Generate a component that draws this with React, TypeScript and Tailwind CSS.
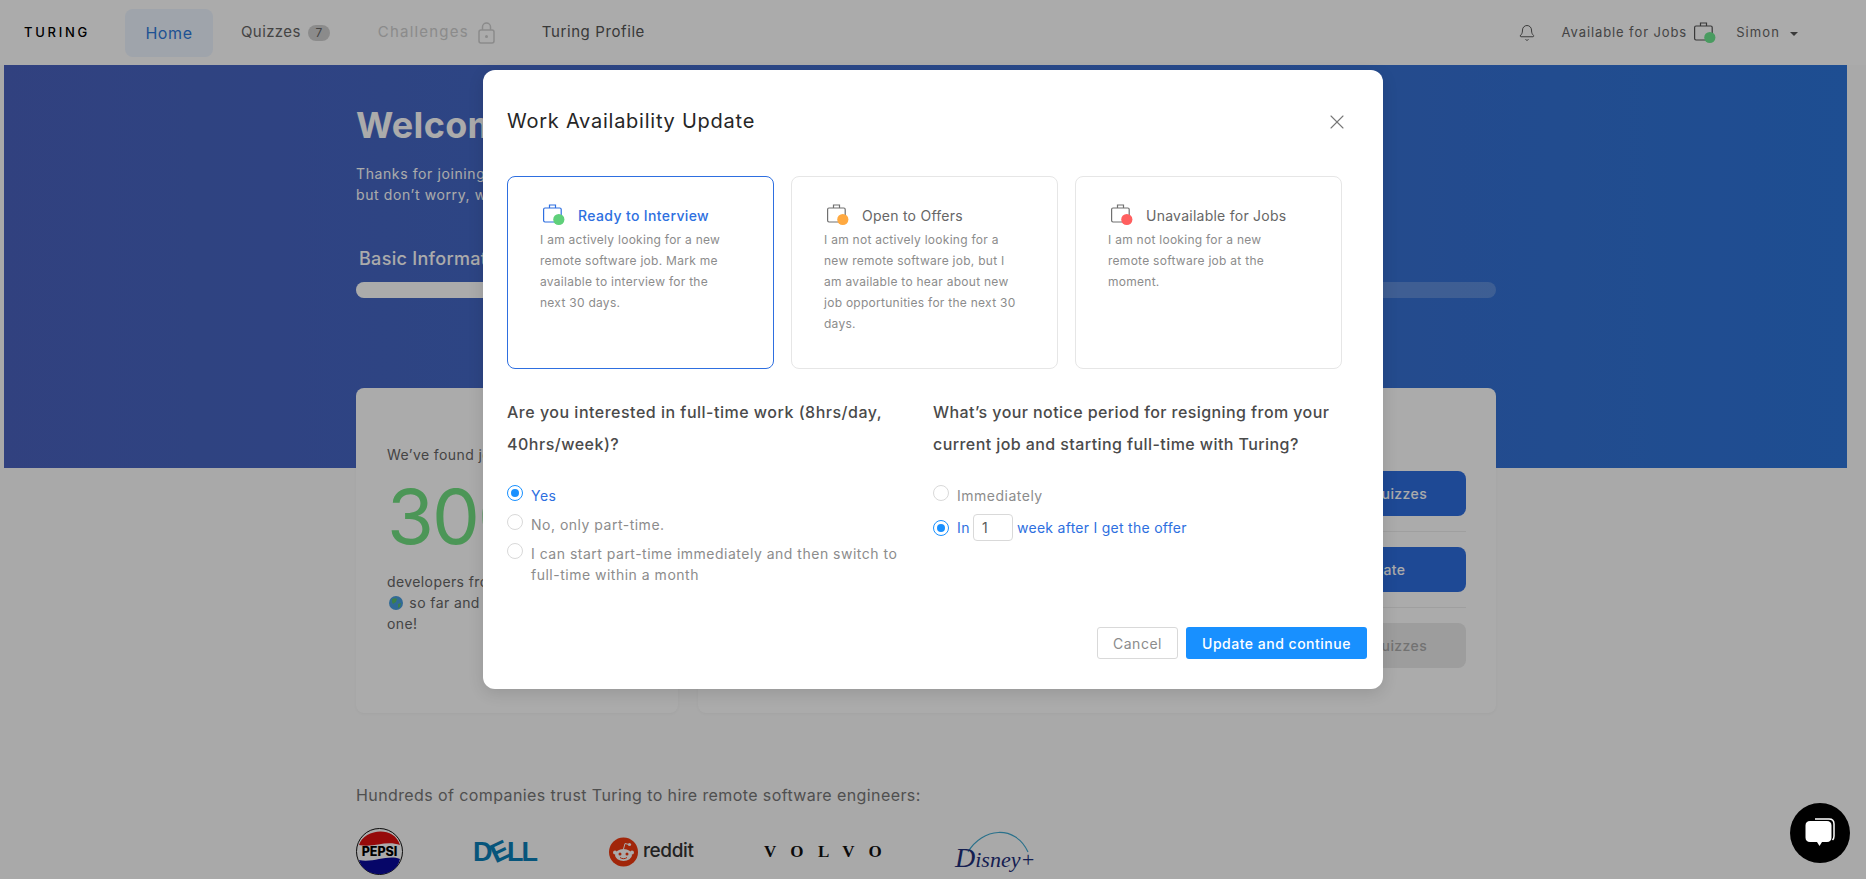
import { Bell, X } from "lucide-react";

function Brief({ dot, stroke }: { dot: string; stroke: string }) {
  return (
    <svg width="22" height="22" viewBox="0 0 22 22" fill="none" className="shrink-0">
      <path d="M6.5 4V1h6v3" stroke={stroke} strokeWidth="1.2" />
      <rect x="0.6" y="4" width="17.6" height="14" rx="1.4" stroke={stroke} strokeWidth="1.2" />
      <circle cx="15.8" cy="15.5" r="5.6" fill={dot} />
    </svg>
  );
}

function Radio({ on }: { on?: boolean }) {
  return on ? (
    <span className="w-4 h-4 rounded-full border border-[#1890ff] flex items-center justify-center shrink-0">
      <span className="w-2 h-2 rounded-full bg-[#1890ff]" />
    </span>
  ) : (
    <span className="w-4 h-4 rounded-full border border-[#d9d9d9] shrink-0" />
  );
}

const desc = "text-[12px] leading-[21px] tracking-[0.27px] text-[#8c8c8c] mt-[3px] ml-[-3px]";

function OptionCard({
  active,
  dot,
  title,
  lines,
}: {
  active?: boolean;
  dot: string;
  title: string;
  lines: string[];
}) {
  return (
    <div
      className={
        active
          ? "w-[267px] h-[193px] rounded-[8px] border border-[#2e6fe0] pt-[27px] pl-[35px]"
          : "w-[267px] h-[193px] rounded-[8px] border border-[#e6e6e6] pt-[27px] pl-[35px]"
      }
    >
      <div className="flex items-center gap-[13px] h-[22px]">
        <Brief dot={dot} stroke={active ? "#2e6fe0" : "#707070"} />
        {active ? (
          <span className="text-[14px] font-medium tracking-[0.37px] text-[#2e6fe0] pt-[1px]">{title}</span>
        ) : (
          <span className="text-[14px] tracking-[0.25px] text-[#666] pt-[1px]">{title}</span>
        )}
      </div>
      <p className={desc}>
        {lines.map((l) => (
          <span key={l} className="block whitespace-nowrap">
            {l}
          </span>
        ))}
      </p>
    </div>
  );
}

const qText = "text-[16px] leading-[32px] font-medium tracking-[0.5px] text-[#4a4a4a] whitespace-nowrap";
const qText2 = "text-[16px] leading-[32px] font-medium tracking-[0.42px] text-[#4a4a4a] whitespace-nowrap";
const optText = "text-[14px] leading-[21px] tracking-[0.5px] text-[#8c8c8c]";
const optActive = "text-[14px] leading-[21px] tracking-[0.5px] text-[#2e6fe0]";

function Pepsi() {
  return (
    <svg width="47" height="47" viewBox="0 0 47 47" className="shrink-0">
      <circle cx="23.5" cy="23.5" r="23" fill="#fff" stroke="#111" strokeWidth="1" />
      <path d="M3 17C8 1 38 -3 44 17 C30 12 18 20 3 17Z" fill="#e01010" />
      <path d="M3 32C18 35 32 26 44 31C40 51 8 51 3 32Z" fill="#0a0a9c" />
      <text x="23.5" y="28" textAnchor="middle" fontFamily="Inter" fontWeight="800" fontSize="12.5" fill="#000">
        PEPSI
      </text>
    </svg>
  );
}

function Reddit() {
  return (
    <svg width="29" height="30" viewBox="0 0 29 30" className="shrink-0">
      <circle cx="14.5" cy="15" r="14.5" fill="#f0390f" />
      <ellipse cx="14.5" cy="18" rx="8.5" ry="6" fill="#fff" />
      <circle cx="6" cy="15.5" r="2" fill="#fff" />
      <circle cx="23" cy="15.5" r="2" fill="#fff" />
      <circle cx="11" cy="17" r="1.5" fill="#f0390f" />
      <circle cx="18" cy="17" r="1.5" fill="#f0390f" />
      <path d="M14.5 12L16 6.5l4 1" stroke="#fff" strokeWidth="1" fill="none" />
      <circle cx="20.5" cy="7.5" r="1.6" fill="#fff" />
      <path d="M11 20.5c2 1.6 5 1.6 7 0" stroke="#f0390f" strokeWidth="1" fill="none" />
    </svg>
  );
}

function Chat() {
  return (
    <svg width="34" height="34" viewBox="0 0 34 34" fill="none">
      <path d="M12 3h14c3 0 5 2 5 5v12c0 1.500-.5 3-1.500 4" stroke="#fff" strokeWidth="1.500" />
      <path
        d="M7 5h17c2.800 0 4.500 1.700 4.500 4.500v12c0 2.800-1.700 4.500-4.500 4.500h-5l-2.500 4-2.500-4H7c-2.800 0-4.500-1.700-4.500-4.500v-12C2.500 6.700 4.200 5 7 5Z"
        fill="#fff"
      />
    </svg>
  );
}

export default function App() {
  return (
    <div className="relative w-full h-screen overflow-hidden bg-[#fcfcfc] font-['Inter',sans-serif]">
      {/* Nav */}
      <nav className="h-[65px] bg-white flex items-center pl-[24px] pr-[68px]">
        <span className="w-[101px] text-[13px] font-medium tracking-[2.7px] text-black">TURING</span>
        <div className="w-[88px] h-[48px] rounded-[8px] bg-[#edf5ff] flex items-center justify-center text-[16px] tracking-[0.6px] text-[#2f7bdc]">
          Home
        </div>
        <span className="ml-[28px] text-[15px] tracking-[0.4px] text-[#666]">Quizzes</span>
        <span className="ml-[7px] w-[22px] h-[16px] rounded-full bg-[#d0d0d0] text-center text-[12px] leading-[16px] text-[#666]">7</span>
        <span className="ml-[48px] text-[15px] tracking-[1.2px] text-[#cfcfcf]">Challenges</span>
        <svg width="17" height="22" viewBox="0 0 17 22" fill="none" className="ml-[9px]">
          <rect x="1" y="8" width="15" height="13" rx="2" stroke="#cfcfcf" strokeWidth="1.500" />
          <path d="M4.500 8V5a4 4 0 0 1 8 0v3" stroke="#cfcfcf" strokeWidth="1.500" />
          <circle cx="8.500" cy="14.500" r="1.500" fill="#cfcfcf" />
        </svg>
        <span className="ml-[47px] text-[15px] tracking-[0.6px] text-[#555]">Turing Profile</span>
        <div className="ml-auto flex items-center">
          <Bell size={18} strokeWidth={1.3} color="#555" />
          <span className="ml-[26px] text-[13px] tracking-[0.9px] text-[#666]">Available for Jobs</span>
          <span className="ml-[7px]">
            <Brief dot="#6ee88f" stroke="#555" />
          </span>
          <span className="ml-[20px] text-[13px] tracking-[1.1px] text-[#666]">Simon</span>
          <span className="ml-[10px] mt-[2px] w-0 h-0 border-l-[4px] border-r-[4px] border-t-[4px] border-l-transparent border-r-transparent border-t-[#555]" />
        </div>
      </nav>

      {/* Hero */}
      <section className="ml-[4px] w-[1843px] h-[403px] bg-gradient-to-r from-[#4962be] to-[#2d75da] pl-[352px] pt-[38px]">
        <h1 className="text-[36px] leading-[44px] font-bold tracking-[0.3px] text-white">Welcome, Simon!</h1>
        <p className="mt-[16px] text-[14px] leading-[21px] tracking-[0.6px] text-white">
          Thanks for joining Turing! We have a few more steps for you,
          <br />
          but don’t worry, we will help you along the way.
        </p>
        <h2 className="mt-[40px] ml-[3px] text-[18px] leading-[27px] font-medium tracking-[0.3px] text-white">Basic Information</h2>
        <div className="mt-[10px] w-[1140px] h-[16px] rounded-full bg-white/20">
          <div className="w-[500px] h-[16px] rounded-full bg-white" />
        </div>
      </section>

      {/* Cards */}
      <div className="ml-[356px] mt-[-80px] w-[1140px] flex gap-[20px] relative">
        <div className="w-[322px] h-[325px] rounded-[8px] bg-white pl-[31px] pt-[56px] shadow-[0_1px_3px_rgba(0,0,0,0.04)]">
          <p className="text-[14px] leading-[21px] tracking-[0.4px] text-[#666]">We’ve found jobs for</p>
          <p className="mt-[11px] text-[76px] leading-[80px] tracking-[-2px] text-[#72e082]">3000+</p>
          <p className="mt-[15px] w-[280px] text-[14px] leading-[21px] tracking-[0.4px] text-[#666]">
            developers from 100+ countries
            <br />
            <svg width="14" height="14" viewBox="0 0 14 14" className="inline mx-[2px] mb-[2px]">
              <circle cx="7" cy="7" r="7" fill="#4a9fe0" />
              <path d="M3 3c2-1 4-1 5 0l-1 3-3 2-1-2ZM9 8l3-1-1 4-2 1Z" fill="#5cbf6a" />
            </svg>{" "}
            so far and you could be the next
            <br />
            one!
          </p>
        </div>
        <div className="w-[798px] h-[325px] rounded-[8px] bg-white pt-[83px] pr-[30px] pl-[30px] shadow-[0_1px_3px_rgba(0,0,0,0.04)]">
          <div className="flex justify-end pb-[15px] mb-[15px] border-b border-[#ededed]">
            <div className="w-[172px] h-[45px] rounded-[8px] bg-[#2e6ede] flex items-center justify-center text-[14px] font-medium tracking-[0.4px] text-white">
              Take Quizzes
            </div>
          </div>
          <div className="flex justify-end pb-[15px] mb-[15px] border-b border-[#ededed]">
            <div className="w-[172px] h-[45px] rounded-[8px] bg-[#2e6ede] flex items-center justify-center text-[14px] font-medium tracking-[0.4px] text-white">
              Update
            </div>
          </div>
          <div className="flex justify-end">
            <div className="w-[172px] h-[45px] rounded-[8px] bg-[#eaeaea] flex items-center justify-center text-[14px] font-medium tracking-[0.4px] text-[#aaa]">
              Take Quizzes
            </div>
          </div>
        </div>
      </div>

      {/* Logos */}
      <div className="ml-[356px] mt-[70px]">
        <p className="text-[16px] leading-[24px] tracking-[0.4px] text-[#777]">Hundreds of companies trust Turing to hire remote software engineers:</p>
        <div className="mt-[21px] flex items-center h-[47px]">
          <Pepsi />
          <span className="ml-[70px] w-[66px] text-[27px] leading-[20px] font-bold tracking-[-1.8px] text-[#0b7fb8] whitespace-nowrap font-['Liberation_Sans',sans-serif]">
            D<span className="inline-block -rotate-[25deg]">E</span>LL
          </span>
          <span className="ml-[70px]">
            <Reddit />
          </span>
          <span className="ml-[5px] w-[50px] text-[19px] font-medium tracking-[-0.4px] text-[#333]">reddit</span>
          <span className="ml-[71px] w-[122px] text-[17px] font-bold tracking-[14.4px] text-[#111] whitespace-nowrap font-['Liberation_Serif',serif]">
            VOLVO
          </span>
          <div className="ml-[69px] relative w-[80px] h-[44px]">
            <svg width="62" height="24" viewBox="0 0 62 24" fill="none" className="absolute left-[12px] top-[0px]">
              <path d="M1 22C15 -2 48 -6 61 22" stroke="#3fa9d0" strokeWidth="1.200" />
            </svg>
            <span className="absolute left-0 top-[14px] text-[22px] leading-[28px] italic text-[#1f2f7a] whitespace-nowrap font-['Liberation_Serif',serif]">
              <span className="text-[28px]">D</span>isney+
            </span>
          </div>
        </div>
      </div>

      {/* Chat bubble */}
      <div className="absolute z-10 left-[1790px] top-[803px] w-[60px] h-[60px] rounded-full bg-black flex items-center justify-center">
        <Chat />
      </div>

      {/* Overlay */}
      <div className="absolute inset-0 bg-black/[0.33]">
        <div className="mt-[70px] ml-[483px] w-[900px] h-[619px] rounded-[12px] bg-white shadow-[0_4px_16px_rgba(0,0,0,0.12)] flex flex-col pl-[24px]">
          <header className="h-[106px] pt-[38px] pr-[34px] flex justify-between items-start">
            <h3 className="text-[20px] leading-[27px] font-normal tracking-[0.75px] text-[#262626]">Work Availability Update</h3>
            <X size={24} strokeWidth={1.1} color="#777" className="mt-[2px]" />
          </header>

          <div className="flex gap-[17px]">
            <OptionCard
              active
              dot="#5fd07a"
              title="Ready to Interview"
              lines={["I am actively looking for a new", "remote software job. Mark me", "available to interview for the", "next 30 days."]}
            />
            <OptionCard
              dot="#ffa940"
              title="Open to Offers"
              lines={["I am not actively looking for a", "new remote software job, but I", "am available to hear about new", "job opportunities for the next 30", "days."]}
            />
            <OptionCard
              dot="#ff5f5f"
              title="Unavailable for Jobs"
              lines={["I am not looking for a new", "remote software job at the", "moment."]}
            />
          </div>

          <div className="mt-[27px] flex">
            <div className="w-[426px]">
              <p className={qText}>
                Are you interested in full-time work (8hrs/day,
                <br />
                40hrs/week)?
              </p>
              <div className="mt-[25px] flex flex-col gap-[8px]">
                <div className="flex gap-[8px]">
                  <Radio on />
                  <span className={optActive}>Yes</span>
                </div>
                <div className="flex gap-[8px]">
                  <Radio />
                  <span className={optText}>No, only part-time.</span>
                </div>
                <div className="flex gap-[8px]">
                  <Radio />
                  <span className={`${optText} whitespace-nowrap`}>
                    I can start part-time immediately and then switch to
                    <br />
                    full-time within a month
                  </span>
                </div>
              </div>
            </div>
            <div>
              <p className={qText2}>
                What’s your notice period for resigning from your
                <br />
                current job and starting full-time with Turing?
              </p>
              <div className="mt-[25px] flex flex-col gap-[8px]">
                <div className="flex gap-[8px]">
                  <Radio />
                  <span className={optText}>Immediately</span>
                </div>
                <div className="flex items-center gap-[8px]">
                  <Radio on />
                  <span className={optActive}>In</span>
                  <span className="ml-[-5px] w-[40px] h-[27px] rounded-[4px] border border-[#d9d9d9] pl-[8px] text-[14px] leading-[25px] text-[#595959]">1</span>
                  <span className="ml-[-4px] text-[14px] leading-[21px] tracking-[0.27px] text-[#2e6fe0]">week after I get the offer</span>
                </div>
              </div>
            </div>
          </div>

          <footer className="mt-auto mb-[30px] mr-[16px] flex justify-end gap-[8px]">
            <div className="w-[81px] h-[32px] rounded-[3px] border border-[#d9d9d9] flex items-center justify-center text-[14px] tracking-[0.5px] text-[#8c8c8c]">
              Cancel
            </div>
            <div className="w-[181px] h-[32px] rounded-[3px] bg-[#1890ff] flex items-center justify-center text-[14px] font-medium tracking-[0.5px] text-white">
              Update and continue
            </div>
          </footer>
        </div>
      </div>
    </div>
  );
}
